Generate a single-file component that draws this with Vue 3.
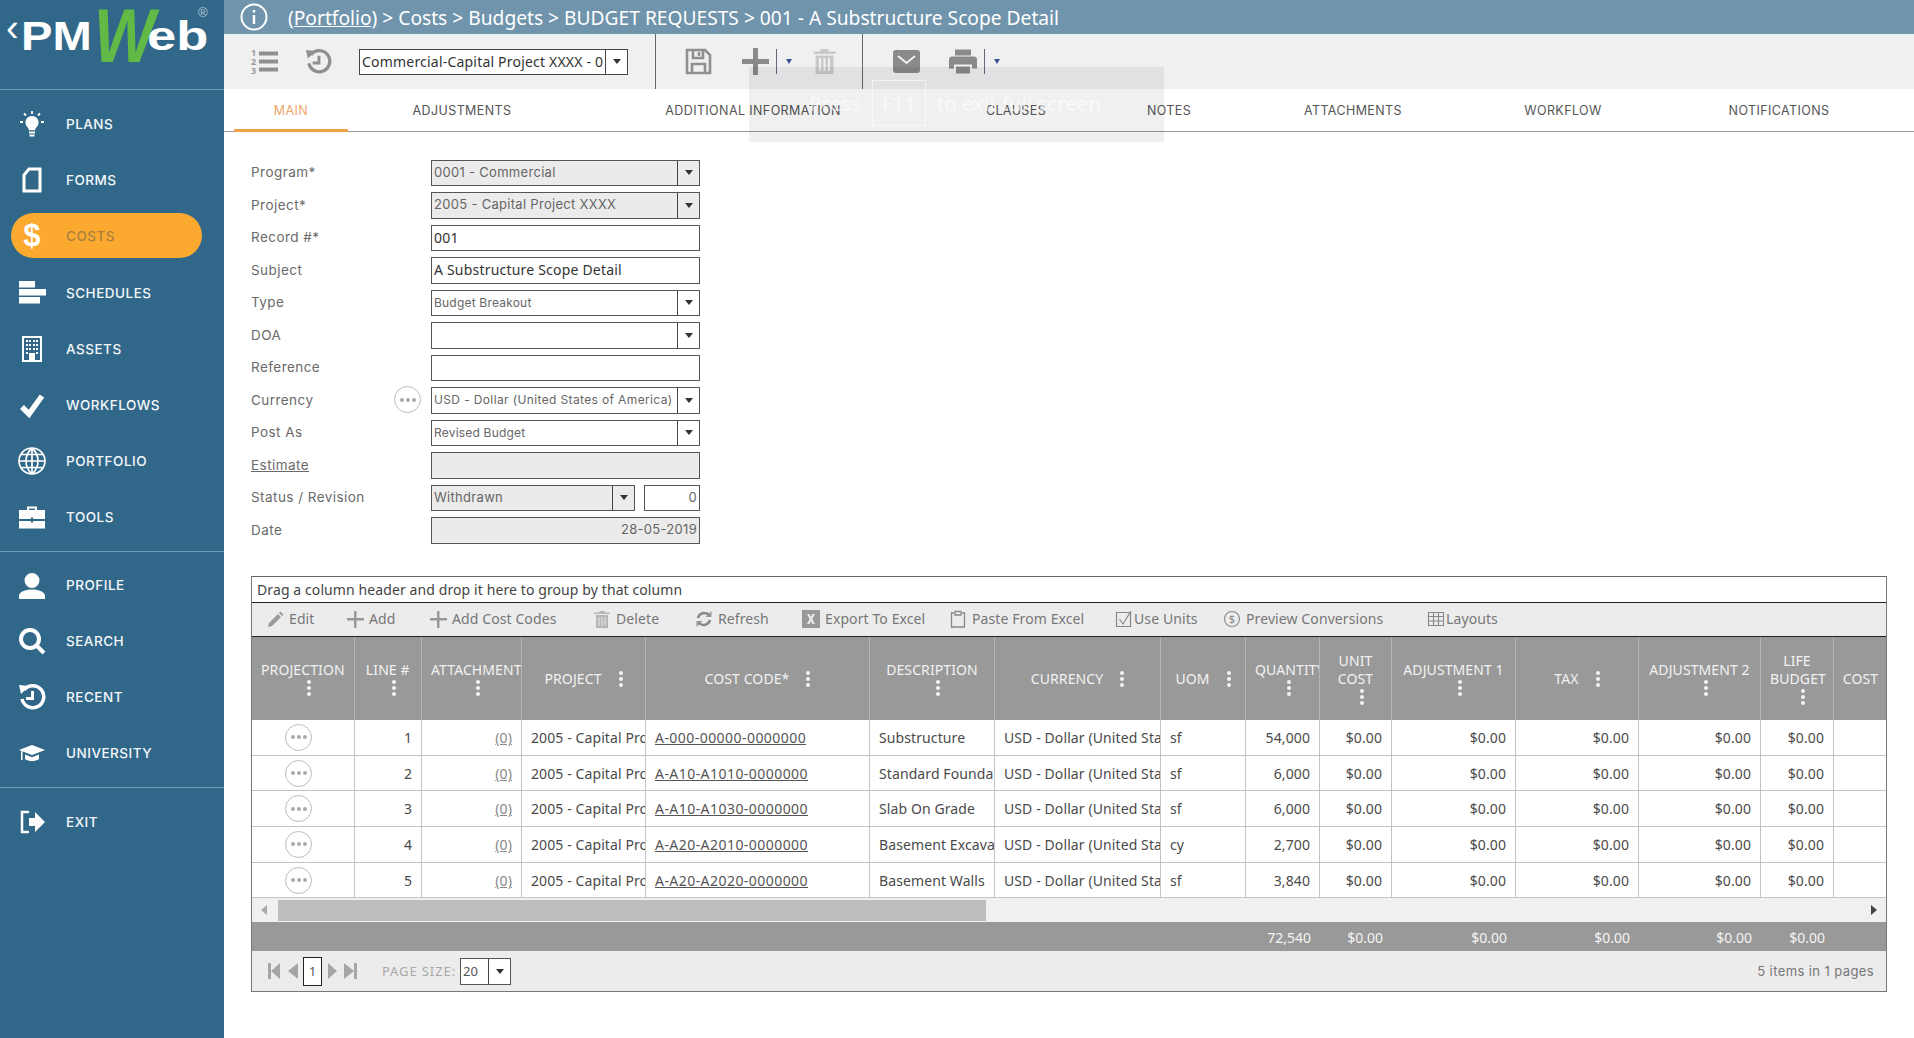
<script setup>
const navTop = [
  { label: "PLANS", d: "M14 6a6.500 6.500 0 0 1 4.500 11.200c-1 1-1.300 2-1.300 3h-6.400c0-1-.3-2-1.300-3A6.500 6.500 0 0 1 14 6z M11 21.500h6v2h-6z M11.500 24.500h5v2h-5z", s: "M14 1v3 M6 3.500l2 2 M22 3.500l-2 2 M2 12h3 M23 12h3", w: 1.8 },
  { label: "FORMS", s: "M11 3h11v22H6V9z", w: 3 },
  { label: "COSTS", active: true, t: "$" },
  { label: "SCHEDULES", d: "M1 2h16v6.500H1z M1 10h27v6.500H1z M1 18h21v6.500H1z" },
  { label: "ASSETS", d: "M4 1h20v26H4z M6 3v22h16V3z M8 5h2v2H8z M11 5h2v2h-2z M15 5h2v2h-2z M18 5h2v2h-2z M8 9h2v2H8z M11 9h2v2h-2z M15 9h2v2h-2z M18 9h2v2h-2z M8 13h2v2H8z M11 13h2v2h-2z M15 13h2v2h-2z M18 13h2v2h-2z M8 17h2v2H8z M18 17h2v2h-2z M11 18h6v7h-6z" },
  { label: "WORKFLOWS", s: "M4 16l7 7L24 5", w: 5.500 },
  { label: "PORTFOLIO", s: "M14 1a13 13 0 1 0 0 26a13 13 0 1 0 0-26z M14 1c-8 7-8 19 0 26 M14 1c8 7 8 19 0 26 M14 1v26 M1 14h26 M3 7.500h22 M3 20.500h22", w: 1.700 },
  { label: "TOOLS", d: "M1 7h26v9H15v-1.500h-2V16H1z M1 18h12v1.500h2V18h12v7.500H1z M9 7V3.500h10V7h-2V5.500h-6V7z" },
];
const navMid = [
  { label: "PROFILE", d: "M14 2a7.500 7.500 0 1 1 0 15a7.500 7.500 0 1 1 0-15z M1 28v-3c0-4 6-6.500 13-6.500s13 2.500 13 6.500v3z" },
  { label: "SEARCH", s: "M12 3a9 9 0 1 0 0 18a9 9 0 1 0 0-18z M18 18l8 8", w: 4 },
  { label: "RECENT", d: "M1 2l10 1-8 8z M13 8h3v9H8v-3h5z", s: "M6 7a11 11 0 1 1-2 9", w: 3.500 },
  { label: "UNIVERSITY", d: "M14 6l13 5-13 5-13-5z M7 15.500l7 2.700 7-2.700v4.500c-2 1.500-4.500 2-7 2s-5-.5-7-2z M3 12l1.500.6V21H3z" },
];
const navEnd = [
  { label: "EXIT", d: "M11 10h6V4l10 10-10 10v-6h-6z", s: "M10 4H4v20h6", w: 2.500 },
];

const tabs = ["MAIN", "ADJUSTMENTS", "ADDITIONAL INFORMATION", "CLAUSES", "NOTES", "ATTACHMENTS", "WORKFLOW", "NOTIFICATIONS"];

const fields = [
  { label: "Program*", value: "0001 - Commercial", select: true, off: true, cls: "wide" },
  { label: "Project*", value: "2005 - Capital Project XXXX", select: true, off: true, cls: "wide" },
  { label: "Record #*", value: "001", cls: "dark" },
  { label: "Subject", value: "A Substructure Scope Detail", cls: "dark" },
  { label: "Type", value: "Budget Breakout", select: true, cls: "small" },
  { label: "DOA", value: "", select: true },
  { label: "Reference", value: "" },
  { label: "Currency", value: "USD - Dollar (United States of America)", select: true, more: true, cls: "small long" },
  { label: "Post As", value: "Revised Budget", select: true, cls: "small" },
  { label: "Estimate", value: "", off: true, link: true },
  { label: "Status / Revision", value: "Withdrawn", select: true, off: true, rev: "0", cls: "wide" },
  { label: "Date", value: "28-05-2019", off: true, cls: "right wide" },
];

const tools = [
  { label: "Edit", d: "M3 13l9-9 3 3-9 9-4 1z M13 3l1.500-1.500 3 3L16 6z" },
  { label: "Add", d: "M8 1h2.500v7H18v2.500h-7.500V18H8v-7.500H1V8h7z" },
  { label: "Add Cost Codes", d: "M8 1h2.500v7H18v2.500h-7.500V18H8v-7.500H1V8h7z" },
  { label: "Delete", d: "M6.500 1h5v1.500H17V4H1V2.500h5.500z M3 5h12v13H3z M5.500 7v9h1V7z M8.500 7v9h1V7z M11.500 7v9h1V7z", rule: "evenodd", light: true },
  { label: "Refresh", s: "M3 8a6.500 6.500 0 0 1 11-3 M15 10a6.500 6.500 0 0 1-11 3", d: "M16.500 1v6h-6z M1.500 17v-6h6z", w: 2.500 },
  { label: "Export To Excel", d: "M0 0h18v18H0z M5 4h2.500L9 7l1.500-3H13l-2.700 5L13 14h-2.500L9 11l-1.500 3H5l2.700-5z", rule: "evenodd" },
  { label: "Paste From Excel", s: "M5 3H2.500v14h13V3H13 M6 1.500h6V5H6z", w: 1.300 },
  { label: "Use Units", s: "M1.500 2.500h14v14h-14z M4.500 9l3.500 5 8-13", w: 1.200, tight: true },
  { label: "Preview Conversions", s: "M9 1.500a7.500 7.500 0 1 0 0 15a7.500 7.500 0 1 0 0-15z", w: 1.100, t: "$" },
  { label: "Layouts", s: "M1.500 2.500h15v13h-15z M1.500 6.500h15 M1.500 11h15 M6.500 2.500v13 M11.500 2.500v13", w: 1.100, tight: true },
];

const columns = [
  { label: "PROJECTION", stack: true },
  { label: "LINE #", stack: true },
  { label: "ATTACHMENTS", stack: true },
  { label: "PROJECT" },
  { label: "COST CODE*" },
  { label: "DESCRIPTION", stack: true },
  { label: "CURRENCY" },
  { label: "UOM" },
  { label: "QUANTITY", stack: true },
  { label: "UNIT COST", stack: true, wrap: true },
  { label: "ADJUSTMENT 1", stack: true },
  { label: "TAX" },
  { label: "ADJUSTMENT 2", stack: true },
  { label: "LIFE BUDGET", stack: true, wrap: true },
  { label: "COST", bare: true },
];

const lines = [
  { line: 1, code: "A-000-00000-0000000", desc: "Substructure", uom: "sf", qty: "54,000" },
  { line: 2, code: "A-A10-A1010-0000000", desc: "Standard Foundations", uom: "sf", qty: "6,000" },
  { line: 3, code: "A-A10-A1030-0000000", desc: "Slab On Grade", uom: "sf", qty: "6,000" },
  { line: 4, code: "A-A20-A2010-0000000", desc: "Basement Excavation", uom: "cy", qty: "2,700" },
  { line: 5, code: "A-A20-A2020-0000000", desc: "Basement Walls", uom: "sf", qty: "3,840" },
];
const moneyCols = 5;
</script>

<template>
  <div class="app">
    <aside class="sidebar">
      <div class="logo">
        <span class="back">‹</span>
        <span class="pm">PM</span>
        <span class="w">W</span>
        <span class="eb">eb</span>
        <span class="reg">®</span>
      </div>
      <nav class="nav nav-top">
        <a v-for="n in navTop" :key="n.label" class="nav-item" :class="{ active: n.active }">
          <span v-if="n.t" class="nav-dollar">{{ n.t }}</span>
          <svg v-else class="nav-icon" viewBox="0 0 28 28">
            <path v-if="n.d" :d="n.d" fill="#fff" fill-rule="evenodd" />
            <path v-if="n.s" :d="n.s" fill="none" stroke="#fff" :stroke-width="n.w" />
          </svg>
          <span>{{ n.label }}</span>
        </a>
      </nav>
      <nav class="nav nav-mid">
        <a v-for="n in navMid" :key="n.label" class="nav-item">
          <svg class="nav-icon" viewBox="0 0 28 28">
            <path v-if="n.d" :d="n.d" fill="#fff" fill-rule="evenodd" />
            <path v-if="n.s" :d="n.s" fill="none" stroke="#fff" :stroke-width="n.w" />
          </svg>
          <span>{{ n.label }}</span>
        </a>
      </nav>
      <nav class="nav nav-end">
        <a v-for="n in navEnd" :key="n.label" class="nav-item">
          <svg class="nav-icon" viewBox="0 0 28 28">
            <path :d="n.d" fill="#fff" />
            <path :d="n.s" fill="none" stroke="#fff" :stroke-width="n.w" stroke-linecap="round" />
          </svg>
          <span>{{ n.label }}</span>
        </a>
      </nav>
    </aside>

    <main class="main">
      <header class="topbar">
        <svg class="info" viewBox="0 0 28 28">
          <circle cx="14" cy="14" r="12.500" fill="none" stroke="#fff" stroke-width="2" />
          <path d="M12.800 7h2.400v2.600h-2.400z M12.800 12h2.400v9h-2.400z" fill="#fff" />
        </svg>
        <span class="crumbs"><u>(Portfolio)</u> &gt; Costs &gt; Budgets &gt; BUDGET REQUESTS &gt; 001 - A Substructure Scope Detail</span>
      </header>

      <div class="toolbar">
        <div class="tb-group tb-one">
          <svg class="tb-icon" viewBox="0 0 27 27">
            <text x="0" y="8" class="digit">1</text>
            <text x="0" y="17" class="digit">2</text>
            <text x="0" y="26" class="digit">3</text>
            <path d="M8 3.500h19v4H8z M8 11.500h19v4H8z M8 19.500h19v4H8z" fill="#8f8f8f" />
          </svg>
          <svg class="tb-icon" viewBox="0 0 28 28">
            <path d="M1 2l10 1-8 8z M13 8h3v9H8v-3h5z" fill="#8f8f8f" />
            <path d="M6 7a11 11 0 1 1-2 9" fill="none" stroke="#8f8f8f" stroke-width="3.500" />
          </svg>
          <div class="picker">
            <span class="picker-text">Commercial-Capital Project XXXX - 0</span>
            <span class="drop"><i class="caret"></i></span>
          </div>
        </div>
        <div class="tb-group tb-two">
          <svg class="tb-icon" viewBox="0 0 27 27">
            <path d="M2 2h18l5 5v18H2z M8 2v8h10V2 M7 25v-9h13v9 M14 4v4" fill="none" stroke="#8f8f8f" stroke-width="2.600" />
          </svg>
          <svg class="tb-icon plus" viewBox="0 0 27 27">
            <path d="M11 0h5v11h11v5H16v11h-5V16H0v-5h11z" fill="#8a8a8a" />
          </svg>
          <span class="split"></span>
          <i class="caret blue"></i>
          <svg class="tb-icon trash" viewBox="0 0 24 27">
            <path d="M8 1h8v2.500h7V6H1V3.500h7z M3 7.500h18V26H3z M6.500 10v13h2V10z M11 10v13h2V10z M15.500 10v13h2V10z" fill="#c9c9c9" fill-rule="evenodd" />
          </svg>
        </div>
        <div class="tb-group tb-three">
          <svg class="tb-icon" viewBox="0 0 27 23">
            <path d="M3 0h21a3 3 0 0 1 3 3v17a3 3 0 0 1-3 3H3a3 3 0 0 1-3-3V3a3 3 0 0 1 3-3z" fill="#8a8a8a" />
            <path d="M5 6l8.500 7L22 6" fill="none" stroke="#f0f0f0" stroke-width="2" />
          </svg>
          <svg class="tb-icon printer" viewBox="0 0 28 24">
            <path d="M6 0h16v6H6z M3 7h22a3 3 0 0 1 3 3v9h-5v-4H5v4H0v-9a3 3 0 0 1 3-3z M7 17h14v7H7z" fill="#8a8a8a" />
          </svg>
          <span class="split"></span>
          <i class="caret blue"></i>
        </div>
      </div>

      <div class="tabs">
        <a v-for="(t, i) in tabs" :key="t" class="tab" :class="{ current: i === 0 }">{{ t }}</a>
      </div>

      <form class="form" @submit.prevent>
        <template v-for="f in fields" :key="f.label">
          <div class="lbl">
            <span :class="{ 'lbl-link': f.link }">{{ f.label }}</span>
            <span v-if="f.more" class="dots-btn"><i></i><i></i><i></i></span>
          </div>
          <div class="ctl">
            <div class="field" :class="{ off: f.off }">
              <span class="val" :class="f.cls">{{ f.value }}</span>
              <span v-if="f.select" class="drop"><i class="caret"></i></span>
            </div>
            <div v-if="f.rev" class="field rev"><span class="val right wide">{{ f.rev }}</span></div>
          </div>
        </template>
      </form>

      <section class="grid">
        <div class="group-hint">Drag a column header and drop it here to group by that column</div>
        <div class="grid-tools">
          <span v-for="t in tools" :key="t.label" class="tool" :class="{ tight: t.tight }">
            <svg class="tool-icon" viewBox="0 0 18 18">
              <path v-if="t.d" :d="t.d" :fill="t.light ? '#b5b5b5' : '#999'" :fill-rule="t.rule" />
              <path v-if="t.s" :d="t.s" fill="none" stroke="#888" :stroke-width="t.w" />
              <text v-if="t.t" x="9" y="13" text-anchor="middle" class="tool-glyph">{{ t.t }}</text>
            </svg>
            {{ t.label }}
          </span>
        </div>

        <div class="g-row g-head">
          <div v-for="c in columns" :key="c.label" class="hc" :class="{ stack: c.stack, wrap: c.wrap }">
            <span class="hc-label">{{ c.label }}</span>
            <span v-if="!c.bare" class="kebab"><i></i><i></i><i></i></span>
          </div>
        </div>

        <div v-for="r in lines" :key="r.line" class="g-row g-body">
          <div class="c center"><span class="dots-btn"><i></i><i></i><i></i></span></div>
          <div class="c num">{{ r.line }}</div>
          <div class="c num"><u class="att">(0)</u></div>
          <div class="c">2005 - Capital Project XXXX</div>
          <div class="c code"><u>{{ r.code }}</u></div>
          <div class="c">{{ r.desc }}</div>
          <div class="c">USD - Dollar (United States of America)</div>
          <div class="c">{{ r.uom }}</div>
          <div class="c num">{{ r.qty }}</div>
          <div v-for="m in moneyCols" :key="m" class="c num">$0.00</div>
          <div class="c"></div>
        </div>

        <div class="scroller">
          <i class="tri left"></i>
          <span class="thumb"></span>
          <i class="tri right"></i>
        </div>

        <div class="g-row g-foot">
          <span></span><span></span><span></span><span></span><span></span><span></span><span></span><span></span>
          <div class="f">72,540</div>
          <div v-for="m in moneyCols" :key="m" class="f">$0.00</div>
          <span></span>
        </div>

        <div class="pager">
          <svg class="pg-icons" viewBox="0 0 32 18">
            <path d="M0 1h3v16H0z M3 9l9-8v16z M20 9l10-8v16z" fill="#a5a5a5" />
          </svg>
          <span class="pg-input">1</span>
          <svg class="pg-icons" viewBox="0 0 32 18">
            <path d="M2 1l9 8-9 8z M18 1l10 8-10 8z M28 1h3v16h-3z" fill="#a5a5a5" />
          </svg>
          <span class="pg-label">PAGE SIZE:</span>
          <span class="pg-select"><span class="pg-size">20</span><span class="drop"><i class="caret"></i></span></span>
          <span class="pg-count">5 items in 1 pages</span>
        </div>
      </section>
    </main>

    <div class="fs-notice">
      <span>Press</span>
      <span class="fs-key">F11</span>
      <span>to exit full screen</span>
    </div>
  </div>
</template>

<style>
html,
body {
  margin: 0;
  background: #fff;
}
</style>

<style scoped>
.app {
  position: relative;
  display: flex;
  width: 1914px;
  height: 1038px;
  overflow: hidden;
  font-family: "Noto Sans", sans-serif;
  color: #555;
}

/* sidebar */
.sidebar {
  flex: 0 0 224px;
  background: #31688a;
  color: #f4f7fa;
}
.logo {
  position: relative;
  height: 90px;
  box-sizing: border-box;
  border-bottom: 1px solid #6e9ab4;
  font-family: "Liberation Sans", sans-serif;
  font-weight: 700;
  font-size: 41px;
  line-height: 41px;
  color: #fff;
}
.logo span {
  position: absolute;
  transform-origin: left center;
}
.back {
  left: 6px;
  top: 8px;
  font-weight: 400;
  font-size: 38px;
}
.pm {
  left: 21px;
  top: 16px;
  transform: scaleX(1.15);
}
.w {
  left: 94px;
  top: -2px;
  font-size: 76px;
  line-height: 76px;
  font-style: italic;
  color: #62b946;
  transform: scaleX(0.85);
}
.eb {
  left: 147px;
  top: 16px;
  transform: scaleX(1.28);
}
.reg {
  left: 198px;
  top: 5px;
  font-size: 13px;
  line-height: 16px;
  font-weight: 400;
  color: #b8cbd8;
}
.nav {
  display: flex;
  flex-direction: column;
}
.nav-top {
  padding: 6px 0 5px;
  border-bottom: 1px solid #6e9ab4;
}
.nav-mid {
  padding: 5px 0 6px;
  border-bottom: 1px solid #6e9ab4;
}
.nav-end {
  padding-top: 6px;
}
.nav-item {
  position: relative;
  display: flex;
  align-items: center;
  height: 56.200px;
  padding-left: 18px;
  font-family: Inter, sans-serif;
  font-size: 13.500px;
  font-weight: 500;
  letter-spacing: 0.5px;
}
.nav-icon {
  flex: 0 0 28px;
  width: 28px;
  height: 28px;
  margin-right: 20px;
}
.nav-item.active {
  color: #a9803f;
  z-index: 0;
}
.nav-item.active::before {
  content: "";
  position: absolute;
  z-index: -1;
  left: 11px;
  top: 5px;
  width: 191px;
  height: 45px;
  border-radius: 23px;
  background: #fca92f;
}
.nav-dollar {
  flex: 0 0 28px;
  margin-right: 20px;
  text-align: center;
  font-family: "Liberation Sans", sans-serif;
  font-size: 31px;
  font-weight: 700;
  color: #fff;
}

/* header */
.main {
  flex: 1;
  min-width: 0;
  display: flex;
  flex-direction: column;
}
.topbar {
  display: flex;
  align-items: center;
  height: 34px;
  padding-left: 16px;
  background: #6f94ac;
  color: #fff;
}
.info {
  width: 28px;
  height: 28px;
  margin-right: 20px;
}
.crumbs {
  font-size: 19.200px;
  white-space: nowrap;
}
.toolbar {
  display: flex;
  height: 55px;
  background: #eef0f2;
}
.tb-group {
  display: flex;
  align-items: center;
  box-sizing: border-box;
  border-right: 1px solid #666;
}
.tb-one {
  width: 432px;
  padding-left: 27px;
  gap: 27px;
}
.tb-two {
  width: 207px;
  padding-left: 29px;
}
.tb-three {
  padding-left: 30px;
  border-right: 0;
}
.tb-icon {
  flex: 0 0 27px;
  width: 27px;
  height: 27px;
}
.digit {
  font-size: 9px;
  font-weight: 700;
  fill: #9a9a9a;
}
.plus {
  margin-left: 30px;
}
.trash {
  margin-left: 19px;
}
.printer {
  margin-left: 29px;
  flex-basis: 28px;
  width: 28px;
}
.split {
  width: 1px;
  height: 25px;
  margin: 0 9px 0 7px;
  background: #667;
}
.picker {
  display: flex;
  align-items: center;
  width: 269px;
  height: 26px;
  box-sizing: border-box;
  border: 1px solid #444;
  background: #fff;
}
.picker-text {
  flex: 1;
  padding-left: 2px;
  font-size: 14px;
  letter-spacing: 0.2px;
  color: #333;
  white-space: nowrap;
  overflow: hidden;
}
.drop {
  flex: 0 0 21px;
  align-self: stretch;
  display: flex;
  align-items: center;
  justify-content: center;
  border-left: 1px solid #444;
}
.caret {
  width: 0;
  height: 0;
  border: 4px solid transparent;
  border-top: 5px solid #333;
  border-bottom: 0;
}
.caret.blue {
  border-width: 3px;
  border-top: 5px solid #3d4f8f;
  border-bottom: 0;
}

/* tabs */
.tabs {
  display: grid;
  grid-template-columns: 114px 228px 354px 172px 134px 234px 186px 246px;
  height: 43px;
  padding-left: 10px;
  box-sizing: border-box;
  border-bottom: 1px solid #999;
}
.tab {
  height: 43px;
  box-sizing: border-box;
  padding-top: 13px;
  text-align: center;
  font-family: Inter, sans-serif;
  font-size: 12.500px;
  letter-spacing: 0.4px;
  line-height: 17px;
  color: #555;
  white-space: nowrap;
}
.tab.current {
  color: #eda76a;
  border-bottom: 3px solid #eda345;
}

/* form */
.form {
  display: grid;
  grid-template-columns: 180px 269px;
  grid-auto-rows: 32.500px;
  margin: 27.500px 0 0 27px;
  font-family: Inter, sans-serif;
}
.lbl {
  display: flex;
  justify-content: space-between;
  height: 25px;
  align-items: center;
  padding-right: 10px;
  font-size: 13.500px;
  letter-spacing: 0.45px;
  color: #6a6a6a;
}
.lbl-link {
  text-decoration: underline;
}
.ctl {
  display: flex;
  gap: 9px;
}
.field {
  flex: 1;
  min-width: 0;
  display: flex;
  height: 26.500px;
  box-sizing: border-box;
  border: 1px solid #555;
  background: #fff;
}
.field.off {
  background: #ebebeb;
}
.field.rev {
  flex: 0 0 56px;
}
.val {
  flex: 1;
  min-width: 0;
  padding: 0 2px;
  font-size: 13px;
  line-height: 23.500px;
  white-space: nowrap;
  overflow: hidden;
  color: #666;
}
.val.dark {
  font-family: "Noto Sans", sans-serif;
  font-size: 14px;
  letter-spacing: 0.2px;
  color: #333;
}
.val.small {
  font-size: 12px;
  letter-spacing: 0.2px;
}
.val.long {
  letter-spacing: 0.37px;
}
.val.wide {
  letter-spacing: 0.3px;
}
.val.right {
  text-align: right;
}

/* shared round ellipsis button */
.dots-btn {
  display: inline-flex;
  align-items: center;
  justify-content: center;
  gap: 2px;
  width: 27px;
  height: 27px;
  box-sizing: border-box;
  border: 1.500px solid #bbb;
  border-radius: 50%;
  background: #fff;
}
.dots-btn i {
  width: 4px;
  height: 4px;
  border-radius: 50%;
  background: #aaa;
}

/* grid */
.grid {
  margin: 26.500px 27px 0 27px;
  border: 1px solid #777;
  border-top-color: #666;
  --cols: 102.500px 67.500px 100px 124px 224px 125px 166px 85px 74px 72px 124px 123px 122px 73px 53px;
}
.group-hint {
  height: 25px;
  padding-left: 5px;
  font-size: 14px;
  letter-spacing: 0.1px;
  line-height: 25px;
  color: #444;
  border-bottom: 1px solid #222;
}
.grid-tools {
  display: grid;
  grid-template-columns: 80px 83px 164px 102px 107px 147px 166px 108px 204px 1fr;
  align-items: center;
  padding: 0 0 2px 14px;
  box-sizing: border-box;
  height: 34px;
  background: #ececec;
  border-bottom: 1px solid #222;
  font-size: 14px;
  letter-spacing: 0.1px;
  color: #777;
}
.tool {
  display: flex;
  align-items: center;
  gap: 5px;
  white-space: nowrap;
}
.tool.tight {
  gap: 1px;
}
.tool-icon {
  flex: 0 0 18px;
  width: 18px;
  height: 18px;
}
.tool-glyph {
  font-size: 11px;
  fill: #888;
}
.g-row {
  display: grid;
  grid-template-columns: var(--cols);
}
.g-head {
  height: 83px;
  background: #999;
  color: #f2f2f2;
  font-size: 14px;
  letter-spacing: 0.1px;
}
.hc {
  display: flex;
  align-items: center;
  justify-content: center;
  gap: 17px;
  min-width: 0;
  padding: 0 9px;
  overflow: hidden;
  border-right: 1px solid #b5b5b5;
  text-align: center;
  white-space: nowrap;
  line-height: 18px;
}
.hc.stack {
  flex-direction: column;
  gap: 1px;
}
.hc.stack .hc-label {
  display: block;
  width: 100%;
}
.hc.stack .kebab {
  transform: translateX(6px);
}
.hc.wrap {
  white-space: normal;
}
.hc:last-child {
  border-right: 0;
}
.kebab {
  display: flex;
  flex-direction: column;
  align-items: center;
  gap: 2px;
}
.kebab i {
  width: 4px;
  height: 4px;
  border-radius: 50%;
  background: #f2f2f2;
}
.g-body {
  height: 35.700px;
  box-sizing: border-box;
  border-bottom: 1px solid #c4c4c4;
  font-size: 14px;
  letter-spacing: 0.1px;
  color: #4a4a4a;
}
.c {
  min-width: 0;
  padding: 0 9px;
  overflow: hidden;
  white-space: nowrap;
  line-height: 35px;
  border-right: 1px solid #c4c4c4;
}
.c:last-child {
  border-right: 0;
}
.c.center {
  display: flex;
  align-items: center;
  justify-content: center;
  padding: 0 8px 0 0;
}
.c.num {
  text-align: right;
}
.c.code {
  letter-spacing: 0.45px;
  color: #555;
}
.att {
  color: #888;
}
.scroller {
  position: relative;
  display: flex;
  align-items: center;
  height: 25px;
  background: #f0f0f0;
  border-bottom: 1px solid #999;
  box-sizing: border-box;
}
.thumb {
  width: 708px;
  height: 21px;
  margin-left: 11px;
  background: #bdbdbd;
}
.tri {
  width: 0;
  height: 0;
  border: 5px solid transparent;
}
.tri.left {
  margin-left: 9px;
  border-left: 0;
  border-right: 6px solid #aaa;
}
.tri.right {
  margin-left: auto;
  margin-right: 9px;
  border-right: 0;
  border-left: 6px solid #444;
}
.g-foot {
  height: 28px;
  background: #999;
  color: #f4f4f4;
  font-size: 14px;
  line-height: 30px;
}
.f {
  padding-right: 9px;
  text-align: right;
}
.pager {
  display: flex;
  align-items: center;
  height: 40px;
  padding-left: 16px;
  background: #ececec;
}
.pg-icons {
  width: 32px;
  height: 18px;
}
.pg-input {
  width: 19px;
  height: 29px;
  margin: 0 4px 0 3px;
  box-sizing: border-box;
  border: 1px solid #222;
  background: #fff;
  text-align: center;
  font-size: 12.500px;
  line-height: 27px;
}
.pg-label {
  margin-left: 24px;
  font-size: 13px;
  letter-spacing: 0.9px;
  color: #a8a8a8;
}
.pg-select {
  display: flex;
  width: 51px;
  height: 27px;
  margin-left: 4px;
  box-sizing: border-box;
  border: 1px solid #555;
  background: #fff;
}
.pg-size {
  flex: 1;
  padding: 3px 0 0 2px;
  font-size: 13px;
}
.pg-count {
  margin-left: auto;
  margin-right: 12px;
  font-family: Inter, sans-serif;
  font-size: 13px;
  letter-spacing: 0.4px;
  color: #777;
}

/* browser's fullscreen notice, lies over the page */
.fs-notice {
  position: absolute;
  left: 749px;
  top: 67px;
  display: flex;
  align-items: center;
  gap: 11px;
  box-sizing: border-box;
  width: 415px;
  height: 75px;
  padding: 0 0 4px 60px;
  background: rgba(0, 0, 0, 0.06);
  font-size: 20.500px;
  color: rgba(255, 255, 255, 0.65);
}
.fs-key {
  padding: 8px 9px;
  border: 1px solid rgba(255, 255, 255, 0.6);
}
</style>
